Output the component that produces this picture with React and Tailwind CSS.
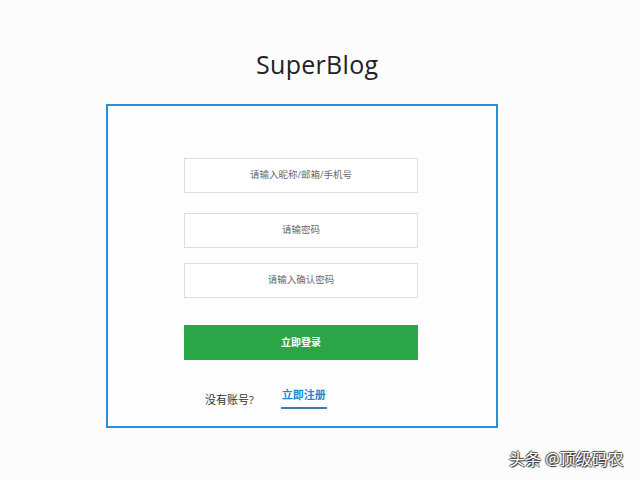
export default function App() {
    return (
        <div className="w-[640px] h-[480px] bg-[#fcfcfd] relative overflow-hidden" style={{ fontFamily: '"Open Sans", "Noto Sans CJK SC", sans-serif' }}>
            {/* Title */}
            <div className="pt-[47px] pl-[256px]">
                <h1 className="text-[25px] leading-[35px] text-[#222] tracking-[0.3px]">SuperBlog</h1>
            </div>

            {/* Card */}
            <div className="mt-[22px] ml-[106px] w-[392px] h-[324px] border-2 border-[#2b8ed8] bg-[#fdfdfe]">
                <div className="ml-[76px] pt-[52px] w-[234px] flex flex-col">
                    <div className="h-[35px] border border-[#dedede] bg-white flex items-center justify-center text-[9.5px] text-[#6a6a6a]">
                        请输入昵称/邮箱/手机号
                    </div>
                    <div className="mt-[20px] h-[35px] border border-[#dedede] bg-white flex items-center justify-center text-[9.5px] text-[#6a6a6a]">
                        请输密码
                    </div>
                    <div className="mt-[15px] h-[35px] border border-[#dedede] bg-white flex items-center justify-center text-[9.5px] text-[#6a6a6a]">
                        请输入确认密码
                    </div>
                    <button className="mt-[27px] h-[35px] bg-[#2aa548] text-white text-[10px] font-bold flex items-center justify-center">
                        立即登录
                    </button>
                    <div className="mt-[27px] flex items-start text-[11px]">
                        <span className="ml-[21px] mt-[5px] text-[#333]">没有账号?</span>
                        <span className="ml-[27px] text-[#1e88d0] font-bold pb-[3px] border-b-2 border-[#3d7aa5] px-[1px]">立即注册</span>
                    </div>
                </div>
            </div>

            {/* Watermark */}
            <div className="absolute left-[509px] top-[447px] text-[16px] text-white" style={{ textShadow: '1px 1px 1px #222, -1px 0 1px #444, 0 -1px 1px #444' }}>
                头条 @顶级码农
            </div>
        </div>
    );
}
